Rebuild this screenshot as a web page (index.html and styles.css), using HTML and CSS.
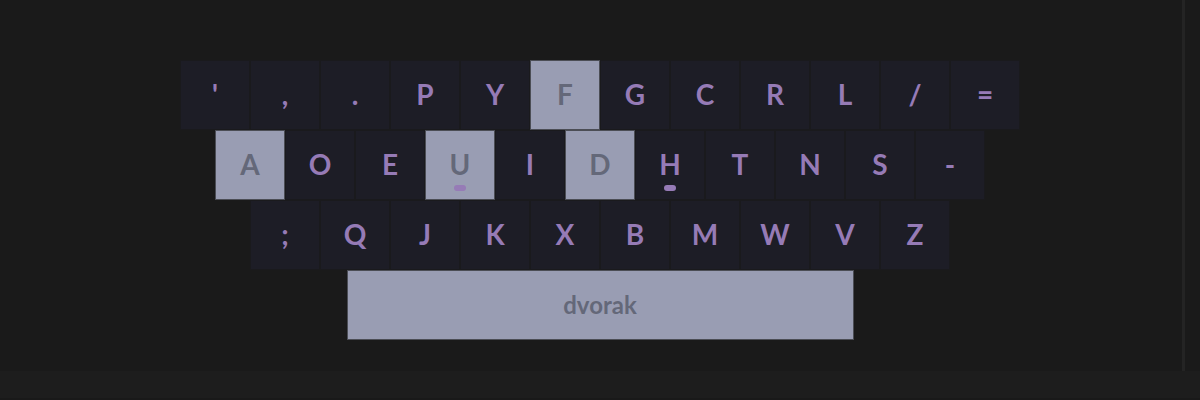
FILE: index.html
```html
<!DOCTYPE html>
<html lang="en">
<head>
<meta charset="utf-8">
<meta name="viewport" content="width=device-width, initial-scale=1">
<title>Dvorak keymap</title>
<link rel="stylesheet" href="styles.css">
</head>
<body>
<div class="page">
  <main class="stage">
    <div class="keymap">
      <div class="row">
        <div class="key">'</div><div class="key">,</div><div class="key">.</div><div class="key">P</div><div class="key">Y</div><div class="key active">F</div><div class="key">G</div><div class="key">C</div><div class="key">R</div><div class="key">L</div><div class="key">/</div><div class="key">=</div>
      </div>
      <div class="row">
        <div class="key active">A</div><div class="key">O</div><div class="key">E</div><div class="key active home">U</div><div class="key">I</div><div class="key active">D</div><div class="key home">H</div><div class="key">T</div><div class="key">N</div><div class="key">S</div><div class="key">-</div>
      </div>
      <div class="row">
        <div class="key">;</div><div class="key">Q</div><div class="key">J</div><div class="key">K</div><div class="key">X</div><div class="key">B</div><div class="key">M</div><div class="key">W</div><div class="key">V</div><div class="key">Z</div>
      </div>
      <div class="row">
        <button type="button" class="key space active">dvorak</button>
      </div>
    </div>
  </main>
  <div class="rail"></div>
</div>
<footer class="footer"></footer>
</body>
</html>
```
FILE: styles.css
```css
* {
  box-sizing: border-box;
}

body {
  display: flex;
  flex-direction: column;
  min-height: 100vh;
  margin: 0;
  background: #1a1a1a;
  color: #967bb6;
  font-family: Lato, "Liberation Sans", sans-serif;
}

.page {
  display: flex;
  flex: 1;
}

.stage {
  flex: 1;
  padding: 60px 0 31px 18px;
}

.rail {
  width: 18px;
  border-left: 3px solid #242424;
}

.keymap {
  display: flex;
  flex-direction: column;
}

.row {
  display: flex;
  justify-content: center;
}

.key {
  position: relative;
  display: flex;
  align-items: center;
  justify-content: center;
  width: 70px;
  height: 70px;
  padding: 0 0 2px;
  border: 1px solid #1a1a1d;
  background: #1d1d26;
  color: inherit;
  font-family: inherit;
  font-size: 28px;
  font-weight: 700;
  line-height: 1;
}

.active {
  border-color: #4b4d55;
  background: #999db3;
  color: #646879;
}

.home::after {
  content: "";
  position: absolute;
  bottom: 8px;
  left: 50%;
  width: 12px;
  height: 6px;
  border-radius: 3px;
  background: #967bb6;
  transform: translateX(-50%);
}

.space {
  width: 507px;
  padding: 0;
  font-size: 24px;
}

.footer {
  height: 29px;
  border-bottom: 2px solid #191919;
  background: #1d1d1d;
}
```
